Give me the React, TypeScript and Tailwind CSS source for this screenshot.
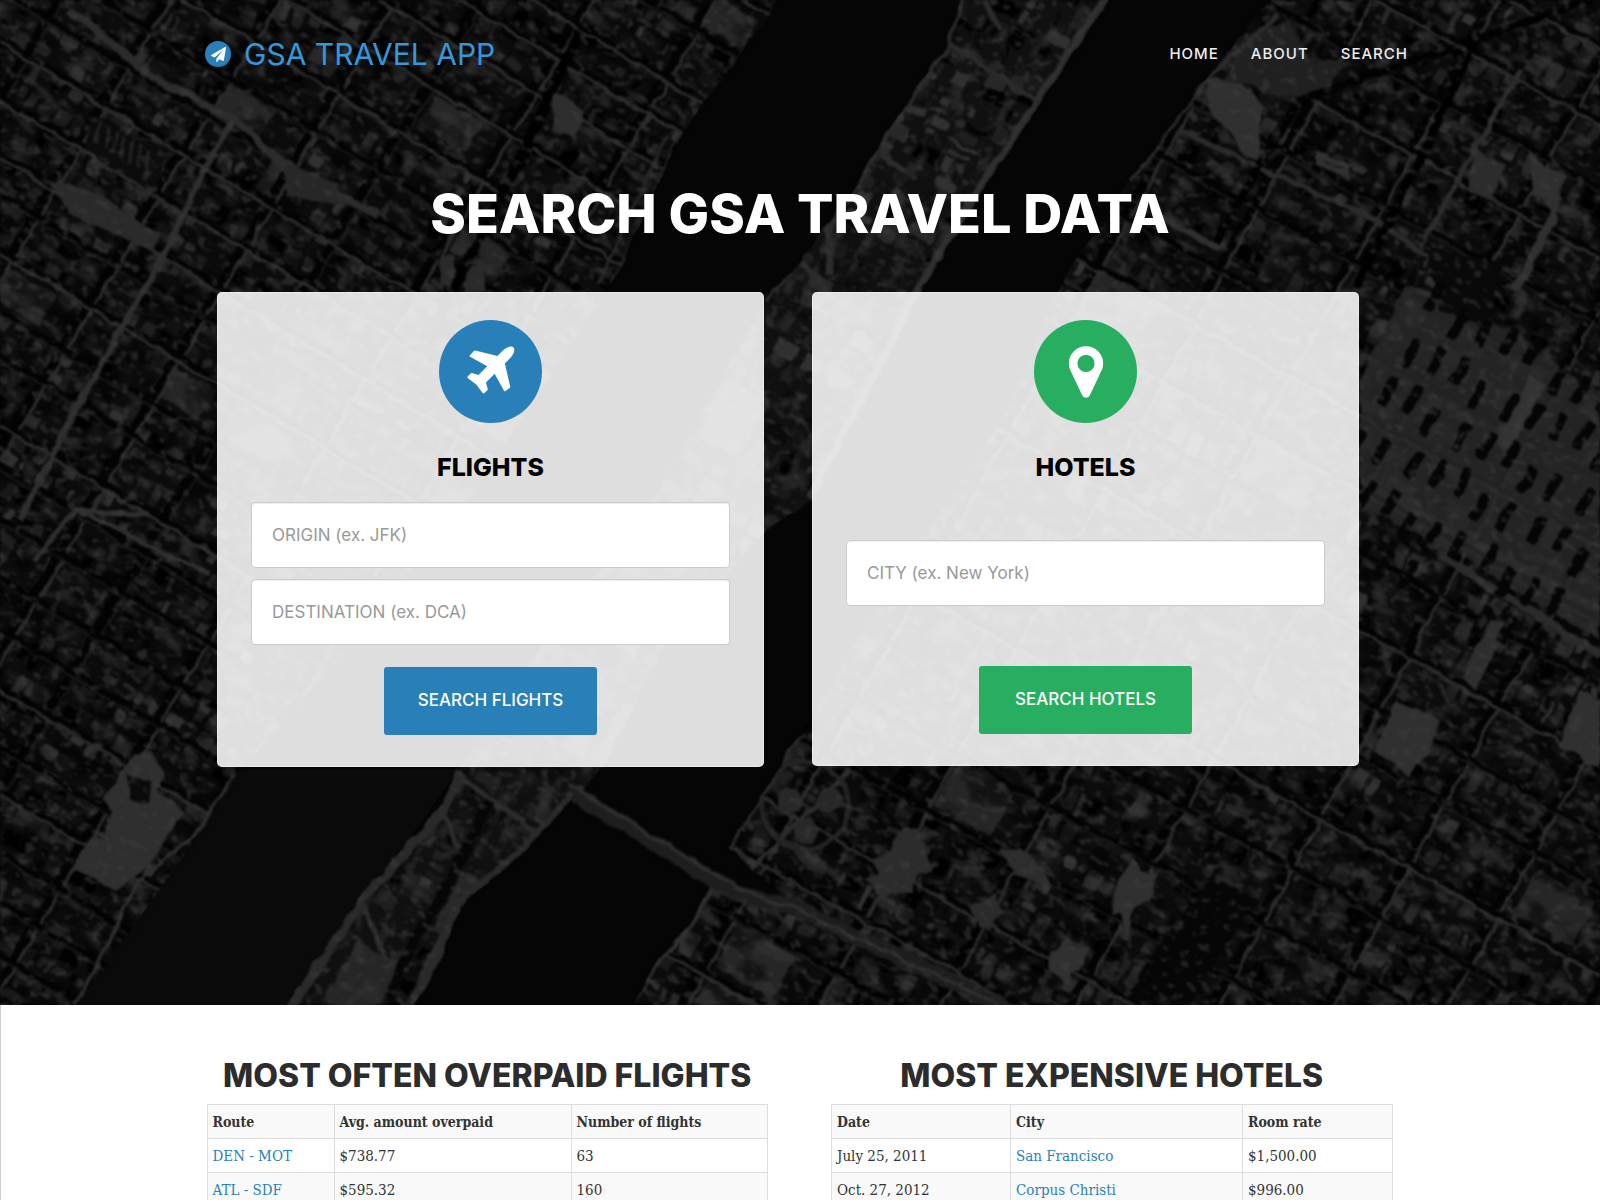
import React from "react";

/* ---------- deterministic random numbers for the aerial drawing ---------- */
function makeRandom(seed: number) {
  let s = seed;
  return () => {
    s = (s * 1664525 + 1013904223) % 4294967296;
    return s / 4294967296;
  };
}

type Block = { x: number; y: number; w: number; h: number; fill: string };
type Street = { d: string; stroke: string; width: number };

function makeCity(seed: number, stepX: number, stepY: number) {
  const rnd = makeRandom(seed);
  const blocks: Block[] = [];
  const streets: Street[] = [];
  const greys = ["#0b0b0b", "#131313", "#1f1f1f", "#020202", "#282828", "#191919", "#313131"];
  for (let x = -1100; x < 1100; x += stepX) {
    for (let y = -900; y < 900; y += stepY) {
      const dark = rnd() < 0.3;
      if (rnd() < 0.07) {
        blocks.push({ x: x + 6, y: y + 6, w: Math.floor(stepX * 0.6), h: stepY - 12, fill: "#262626" });
        continue;
      }
      let px = x + 5;
      while (px < x + stepX - 6) {
        const w = 4 + Math.floor(rnd() * 14);
        for (let r = 0; r < 2; r++) {
          const h = 5 + Math.floor(rnd() * (stepY / 2 - 8));
          const pick = Math.floor(rnd() * (dark ? 4 : greys.length));
          blocks.push({ x: px, y: y + 4 + (r * stepY) / 2, w, h, fill: greys[pick] });
        }
        px += w + 2 + Math.floor(rnd() * 5);
      }
    }
  }
  const addPair = (horizontal: boolean, at: number) => {
    const bright = rnd() < 0.5;
    const drift = Math.floor(rnd() * 24 - 12);
    const line = (o: number) =>
      horizontal ? `M-1100 ${at + o} L1100 ${at + o + drift}` : `M${at + o} -900 L${at + o + drift} 900`;
    streets.push({ d: line(0), stroke: "#030303", width: horizontal ? 5 : 8 });
    streets.push({ d: line(horizontal ? 4 : 6), stroke: bright ? "#2c2c2c" : "#181818", width: bright ? 3 : 2 });
  };
  for (let x = -1100; x < 1100; x += stepX) addPair(false, x + Math.floor(rnd() * 16 - 8));
  for (let y = -900; y < 900; y += stepY) addPair(true, y + Math.floor(rnd() * 10 - 5));
  return { blocks, streets };
}

const WEST = makeCity(7, 92, 46);
const EAST = makeCity(23, 112, 62);
const SLOTS = Array.from({ length: 60 }, (_, i) => ({
  x: (i % 10) * 28 + ((i * 7) % 9),
  y: Math.floor(i / 10) * 50 + ((i * 13) % 17),
}));

function Blocks({ data, place }: { data: typeof WEST; place: string }) {
  return (
    <g transform={place}>
      {data.blocks.map((b, i) => (
        <rect key={i} x={b.x} y={b.y} width={b.w} height={b.h} rx="2" fill={b.fill} />
      ))}
    </g>
  );
}

function Streets({ data, place }: { data: typeof WEST; place: string }) {
  return (
    <g transform={place}>
      {data.streets.map((s, i) => (
        <path key={i} d={s.d} stroke={s.stroke} strokeWidth={s.width} />
      ))}
    </g>
  );
}

/* Darkened satellite view: two shores, the island between them and the bridge */
function AerialMap() {
  const west = "M0 0H775L765 20L680 135L612 283L480 480L370 625L240 770L200 833L77 1005H0Z";
  const island =
    "M961 0H1108L1040 103L984 187L922 290L812 500L765 530L663 650L602 767L571 800L525 850L459 907L438 967L413 1005H288L357 900L438 810L459 770L560 620L660 487L765 300L800 263L856 187L876 150L948 43Z";
  const east =
    "M1270 0H1600V1005H633L658 960L694 920L714 873L735 895L800 913L730 847L800 735L870 620L1004 417L1060 287L1085 247L1131 180L1208 77L1249 27Z";
  const westPlace = "translate(330 430) rotate(31)";
  const eastPlace = "translate(1200 500) rotate(29)";
  return (
    <svg
      aria-hidden="true"
      className="absolute inset-0 h-full w-full"
      viewBox="0 0 1600 1005"
      preserveAspectRatio="xMidYMid slice"
      fill="none"
    >
      <defs>
        <clipPath id="west"><path d={west} /></clipPath>
        <clipPath id="island"><path d={island} /></clipPath>
        <clipPath id="east"><path d={east} /></clipPath>
        <clipPath id="land"><path d={west} /><path d={island} /><path d={east} /></clipPath>
        <filter id="soft" x="0" y="0" width="1" height="1" colorInterpolationFilters="sRGB">
          <feTurbulence type="fractalNoise" baseFrequency="0.05" numOctaves="2" seed="4" result="n" />
          <feDisplacementMap in="SourceGraphic" in2="n" scale="8" xChannelSelector="R" yChannelSelector="G" />
          <feGaussianBlur stdDeviation="1" />
        </filter>
        <filter id="grain" x="0" y="0" width="1" height="1" colorInterpolationFilters="sRGB">
          <feTurbulence type="fractalNoise" baseFrequency="0.035 0.06" numOctaves="4" seed="11" />
          <feColorMatrix values="0 0 0 0 0.2  0 0 0 0 0.2  0 0 0 0 0.2  5 0 0 0 -2.6" />
          <feGaussianBlur stdDeviation="1" />
        </filter>
        <filter id="speckle" x="0" y="0" width="1" height="1" colorInterpolationFilters="sRGB">
          <feTurbulence type="fractalNoise" baseFrequency="0.09 0.13" numOctaves="2" seed="57" />
          <feColorMatrix values="0 0 0 0 0.24  0 0 0 0 0.24  0 0 0 0 0.24  0 6 0 0 -3.4" />
          <feGaussianBlur stdDeviation="1" />
        </filter>
        <filter id="shade" x="0" y="0" width="1" height="1" colorInterpolationFilters="sRGB">
          <feTurbulence type="fractalNoise" baseFrequency="0.03 0.04" numOctaves="4" seed="31" />
          <feColorMatrix values="0 0 0 0 0  0 0 0 0 0  0 0 0 0 0  0 5 0 0 -2.3" />
          <feGaussianBlur stdDeviation="1" />
        </filter>
      </defs>
      <rect width="1600" height="1005" fill="#050505" />
      <path d="M240 770L459 770L288 1005H77Z" fill="#0a0a0a" />

      <g filter="url(#soft)">
        <rect width="1600" height="1005" fill="#050505" opacity="0" />
        <g clipPath="url(#west)">
          <rect width="800" height="1005" fill="#0c0c0c" />
          <Blocks data={WEST} place={westPlace} />
        </g>
        <g clipPath="url(#island)">
          <rect width="1200" height="1005" fill="#101010" />
          <Blocks data={EAST} place="translate(760 500) rotate(-62)" />
        </g>
        <g clipPath="url(#east)">
          <rect x="600" width="1000" height="1005" fill="#0c0c0c" />
          <Blocks data={EAST} place={eastPlace} />
        </g>
      </g>

      <g clipPath="url(#west)">
        <g transform="rotate(31)"><rect x="-100" y="-500" width="1300" height="1500" filter="url(#grain)" opacity="0.6" /></g>
        <g transform="rotate(31)"><rect x="-100" y="-500" width="1300" height="1500" filter="url(#shade)" opacity="0.5" /></g>
      </g>
      <g clipPath="url(#island)">
        <g transform="rotate(-60)"><rect x="-900" y="0" width="2000" height="1500" filter="url(#grain)" opacity="0.6" /></g>
      </g>
      <g clipPath="url(#east)">
        <g transform="rotate(29)"><rect x="500" y="-900" width="1500" height="1800" filter="url(#grain)" opacity="0.7" /></g>
        <g transform="rotate(29)"><rect x="500" y="-900" width="1500" height="1800" filter="url(#shade)" opacity="0.5" /></g>
      </g>

      <g filter="url(#soft)">
        <rect width="1600" height="1005" fill="#050505" opacity="0" />
        <g clipPath="url(#west)">
          <Streets data={WEST} place={westPlace} />
          <path d="M70 10L150 75L235 120L300 180L380 215" stroke="#2c2c2c" strokeWidth="8" />
          <path d="M235 120L209 160L168 247L120 330L75 410L20 520" stroke="#2e2e2e" strokeWidth="6" />
          <path d="M50 180L90 190L160 235L155 250L70 215Z" fill="#2a2a2a" />
          <path d="M285 160L340 185L335 205L285 195Z" fill="#272727" />
          <path d="M550 90L585 110L575 140L555 130Z" fill="#2e2e2e" />
          <path d="M440 255h14v30h-14zM465 265h20v26h-20z" fill="#2a2a2a" />
          <path d="M95 115L165 155L155 195L85 150Z" fill="#0c0c0c" />
          <path
            d="M102 122l-6 22M110 127l-6 22M118 131l-6 22M126 136l-6 22M134 141l-6 22M142 145l-6 22M150 150l-6 22"
            stroke="#232323"
            strokeWidth="3"
          />
          <path d="M580 30L520 160L480 240L420 350" stroke="#010101" strokeWidth="10" />
          <path d="M680 135L612 283M668 135L598 285" stroke="#262626" strokeWidth="3" />
          <path d="M150 515L75 510L35 560M80 512L210 575" stroke="#303030" strokeWidth="5" />
          <path d="M135 755L150 752L165 775L158 790L185 812L165 840L150 865L115 890L72 868L92 835L104 838L112 810L102 800Z" fill="#2f2f2f" />
          <path d="M128 775L150 782L148 805L130 800Z" fill="#0a0a0a" />
          <path d="M232 775L196 835L140 880L75 1005" stroke="#303030" strokeWidth="3" />
        </g>

        <g clipPath="url(#island)">
          <path d="M961 0L948 43L876 150L856 187L765 300" stroke="#2c2c2c" strokeWidth="7" />
          <path d="M1108 0L1040 103L984 187L922 290L812 500" stroke="#303030" strokeWidth="14" />
          <path d="M948 43L1040 103M985 0L1000 30M880 155L905 170" stroke="#2c2c2c" strokeWidth="5" />
          <path d="M800 263L835 300M830 275V200" stroke="#2c2c2c" strokeWidth="7" />
          <path d="M459 770L438 810L357 900L288 1005" stroke="#2a2a2a" strokeWidth="18" />
          <path d="M571 800L525 850L459 907L413 1005" stroke="#2a2a2a" strokeWidth="12" />
          <path d="M465 780L535 830M440 810L460 850M365 905L385 960" stroke="#2c2c2c" strokeWidth="5" />
          <path d="M490 800L465 850L440 900L410 945L390 1000" stroke="#060606" strokeWidth="10" />
        </g>

        <g clipPath="url(#east)">
          <Streets data={EAST} place={eastPlace} />
          <path d="M1208 77L1240 82L1262 105L1258 160L1240 150L1228 130L1210 115Z" fill="#303030" />
          <path d="M1245 35L1290 20L1310 60L1350 62L1310 100L1225 80Z" fill="#202020" />
          <path d="M1278 15L1208 77L1131 180" stroke="#2c2c2c" strokeWidth="5" />
          <path d="M1178 130L1255 165L1380 222L1425 255L1500 295" stroke="#2b2b2b" strokeWidth="5" />
          <path d="M1478 33L1420 160L1356 287" stroke="#000000" strokeWidth="8" />
          <path d="M1590 0L1300 100L1260 165L1215 245" stroke="#020202" strokeWidth="8" />
          <path d="M1522 70L1480 140L1425 240" stroke="#2c2c2c" strokeWidth="5" />
          <path d="M1530 150L1545 168L1565 175L1555 220L1545 200L1532 195Z" fill="#2f2f2f" />
          <path d="M1475 145L1490 160L1505 165L1490 200L1470 190Z" fill="#2c2c2c" />
          <path d="M1555 215L1515 290" stroke="#303030" strokeWidth="9" />
          <path d="M1160 215L1220 250M1320 155l26 12v8l-26-12z" stroke="#303030" strokeWidth="6" />
          <path
            d="M1405 285L1450 300L1510 330L1570 375L1600 400V640L1530 600L1460 555L1360 505V380Z"
            fill="#2a2a2a"
            opacity="0.8"
          />
          <path d="M1440 555L1600 655M1360 480L1460 535L1600 610" stroke="#2b2b2b" strokeWidth="8" />
          <path d="M1495 440L1530 375L1545 385L1510 450Z" fill="#333333" />
          <path d="M1395 700L1440 720L1425 755L1410 775L1395 765L1375 750Z" fill="#303030" />
          <path d="M1580 690L1600 700V770L1560 745Z" fill="#303030" />
          <path d="M1490 620L1510 625L1475 690L1462 680Z" fill="#2e2e2e" />
          <path d="M900 830l16 -4 10 18 5 28-14 2-6 18-18 0-10 10-18-22 14-6-6-16 16-6z" fill="#2c2c2c" />
          <path d="M1118 880l14-22 10 14 15 2-6 28-16 6-4 14-4 16-6-24-10 0z" fill="#303030" />
          <path d="M1050 950l10-4 8-10 6 14 14 0-8 20-6 2-4 14-10-8-12-6z" fill="#303030" />
          <path d="M1000 850l20-2 26 24 6 14-16-4-20-8z" fill="#2d2d2d" />
          <path d="M970 905l14-4 12-10 2 14 6 6-10 10-2 10-12-4z" fill="#2b2b2b" />
          <path d="M1210 875L1255 900L1190 1000H1125L1150 960Z" fill="#060606" />
          <path d="M1425 245L1500 265L1490 330L1440 310Z" fill="#090909" />
          <path d="M800 735L730 847L750 870L850 770" stroke="#2c2c2c" strokeWidth="5" />
          <circle cx="805" cy="805" r="44" stroke="#242424" strokeWidth="5" />
          <circle cx="790" cy="800" r="12" fill="#282828" />
          <circle cx="830" cy="800" r="12" fill="#282828" />
          <circle cx="806" cy="832" r="12" fill="#282828" />
          <path d="M714 873L694 920L658 960L633 1000" stroke="#303030" strokeWidth="7" />
          <g transform="translate(1455 290) rotate(29)" fill="#050505">
            {SLOTS.map((s, i) => (
              <rect key={i} x={s.x - 20} y={s.y} width="10" height="30" rx="3" />
            ))}
          </g>
        </g>
        <path d="M568 790L735 893L800 910L1010 1010" stroke="#1e1e1e" strokeWidth="16" />
        <path d="M568 784L735 887L800 912L1000 1005" stroke="#303030" strokeWidth="3" />
      </g>
      <g clipPath="url(#land)">
        <g transform="rotate(30)">
          <rect x="-100" y="-900" width="2100" height="1900" filter="url(#speckle)" opacity="0.55" />
        </g>
      </g>
    </svg>
  );
}

/* ------------------------------- icons ---------------------------------- */
const PLANE =
  "M1568 160q44 52 12 148t-108 172l-161 161 160 696q5 19-12 33l-128 96q-7 6-19 6-4 0-7-1-15-3-21-16l-279-508-259 259 53 194q5 17-8 31l-96 96q-9 9-23 9h-2q-15-2-24-13l-189-252-252-189q-11-7-13-23-1-13 9-25l96-97q9-9 23-9 6 0 8 1l194 53 259-259-508-279q-14-8-17-24-2-16 9-27l128-128q14-13 30-8l665 159 160-160q76-76 172-108t148 12z";
const MARKER =
  "M1152 640q0-106-75-181t-181-75-181 75-75 181 75 181 181 75 181-75 75-181zm256 0q0 109-33 179l-364 774q-16 33-47.5 52t-67.5 19-67.5-19-46.5-52l-365-774q-33-70-33-179 0-212 150-362t362-150 362 150 150 362z";
const PAPER_PLANE =
  "M1764 11q33 24 27 64l-256 1536q-5 29-32 45-14 8-31 8-11 0-24-5l-453-185-242 295q-18 23-49 23-13 0-22-4-19-7-30.5-23.5t-11.5-36.5v-349l864-1059-1069 925-395-162q-37-14-40-55-2-40 32-59l1664-960q15-9 32-9 20 0 36 11z";

function Glyph({ path, className }: { path: string; className: string }) {
  return (
    <svg aria-hidden="true" viewBox="0 0 1792 1792" fill="currentColor" className={className}>
      <path d={path} />
    </svg>
  );
}

/* ------------------------------ building parts --------------------------- */
function Field({ label, placeholder }: { label: string; placeholder: string }) {
  return (
    <input
      type="text"
      aria-label={label}
      placeholder={placeholder}
      className="block h-[66px] w-full rounded border border-[#cccccc] bg-white px-5 text-[17px] text-[#333333] shadow-[inset_0_1px_1px_rgba(0,0,0,0.075)] placeholder:text-[#999999]"
    />
  );
}

function SearchCard({
  path, circle, title, fields, button, children,
}: {
  path: string; circle: string; title: string; fields: string; button: string; children: React.ReactNode;
}) {
  return (
    <form className="flex flex-col items-center rounded-[5px] border border-white/40 bg-white/[0.87] px-[33px] pt-[27px] pb-[31px]">
      <span className={`flex size-[103px] items-center justify-center rounded-full text-white ${circle}`}>
        <Glyph path={path} className="size-[60px]" />
      </span>
      <h2 className="mt-[26px] text-[25px] leading-9 font-extrabold text-black">{title}</h2>
      <div className={`flex w-full flex-col gap-[11px] ${fields}`}>{children}</div>
      <button
        type="button"
        className={`h-[68px] w-[213px] rounded-[3px] text-[17px] font-medium text-white ${button}`}
      >
        SEARCH {title}
      </button>
    </form>
  );
}

function DataTable({
  heading, columns, widths, rows, linkColumn,
}: {
  heading: string; columns: string[]; widths: string[]; rows: string[][]; linkColumn: number;
}) {
  return (
    <section>
      <h2 className="text-center text-[32px] leading-10 font-extrabold text-[#2c2c2c]">{heading}</h2>
      <table className="mt-2 w-full table-fixed border-collapse border border-[#dddddd] text-left font-['DejaVu_Serif_Condensed','DejaVu_Serif',serif] text-[15px] leading-5 text-[#333333]">
        <thead>
          <tr className="h-[34px] bg-[#f9f9f9]">
            {columns.map((c, i) => (
              <th key={c} scope="col" className={`border border-[#dddddd] px-[5px] text-[14px] font-bold ${widths[i]}`}>{c}</th>
            ))}
          </tr>
        </thead>
        <tbody>
          {rows.map((r) => (
            <tr key={r[0]} className="h-[34px] even:bg-[#f9f9f9]">
              {r.map((v, i) => (
                <td key={i} className="border border-[#dddddd] px-[5px]">
                  {i === linkColumn ? <a href="#" className="text-[#2980b9]">{v}</a> : v}
                </td>
              ))}
            </tr>
          ))}
        </tbody>
      </table>
    </section>
  );
}

export default function App() {
  return (
    <div className="h-screen overflow-hidden bg-white font-['Inter','Open_Sans',sans-serif]">
      <div className="relative overflow-hidden bg-[#050505] pb-[238px]">
        <AerialMap />
        <header className="relative mx-auto flex max-w-[1216px] items-center justify-between pt-[30px] pl-[13px]">
          <a href="#" className="flex items-center gap-[13px] text-[30px] leading-12 text-[#3498db]">
            <span className="flex size-[26px] items-center justify-center rounded-full bg-[#2980b9] text-white">
              <Glyph path={PAPER_PLANE} className="size-[15px]" />
            </span>
            GSA TRAVEL APP
          </a>
          <nav className="flex gap-8 text-[15px] leading-5 font-medium tracking-[1px] text-[#eeeeee]">
            <a href="#">HOME</a>
            <a href="#">ABOUT</a>
            <a href="#">SEARCH</a>
          </nav>
        </header>
        <main className="relative">
          <h1 className="mt-[104px] text-center text-[54px] leading-16 font-extrabold text-white">
            SEARCH GSA TRAVEL DATA
          </h1>
          <div className="mx-auto mt-[46px] grid max-w-[1216px] grid-cols-2 items-start gap-12 pr-[49px] pl-[25px]">
            <SearchCard
              path={PLANE}
              circle="bg-[#2980b9]"
              title="FLIGHTS"
              fields="mt-[17px] mb-[22px]"
              button="bg-[#2980b9]"
            >
              <Field label="Origin" placeholder="ORIGIN (ex. JFK)" />
              <Field label="Destination" placeholder="DESTINATION (ex. DCA)" />
            </SearchCard>
            <SearchCard
              path={MARKER}
              circle="bg-[#27ae60]"
              title="HOTELS"
              fields="mt-[55px] mb-[60px]"
              button="bg-[#27ae60]"
            >
              <Field label="City" placeholder="CITY (ex. New York)" />
            </SearchCard>
          </div>
        </main>
      </div>
      <div className="min-h-full border-l border-[#cccccc]">
        <div className="mx-auto grid max-w-[1216px] grid-cols-2 gap-[63px] pt-[51px] pr-4 pl-[14px]">
          <DataTable
            heading="MOST OFTEN OVERPAID FLIGHTS"
            columns={["Route", "Avg. amount overpaid", "Number of flights"]}
            widths={["w-[127px]", "w-[237px]", "w-auto"]}
            rows={[
              ["DEN - MOT", "$738.77", "63"],
              ["ATL - SDF", "$595.32", "160"],
            ]}
            linkColumn={0}
          />
          <DataTable
            heading="MOST EXPENSIVE HOTELS"
            columns={["Date", "City", "Room rate"]}
            widths={["w-[179px]", "w-[232px]", "w-auto"]}
            rows={[
              ["July 25, 2011", "San Francisco", "$1,500.00"],
              ["Oct. 27, 2012", "Corpus Christi", "$996.00"],
            ]}
            linkColumn={1}
          />
        </div>
      </div>
    </div>
  );
}
